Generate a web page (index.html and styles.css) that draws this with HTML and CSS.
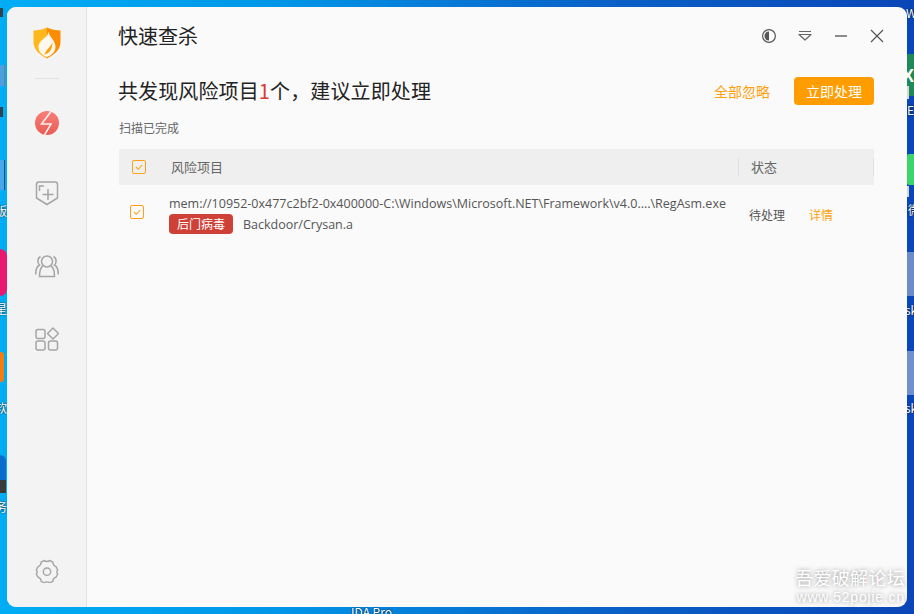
FILE: index.html
```html
<!DOCTYPE html>
<html lang="zh-CN">
<head>
<meta charset="utf-8">
<title>快速查杀</title>
<link rel="stylesheet" href="styles.css">
</head>
<body>
<div class="desktop">
  <div class="dk dk-excel"><span class="dk-x">X</span></div>
  <div class="dk dk-excel-tab"></div>
  <div class="dk dk-green"></div>
  <div class="dk dk-green-tab"></div>
  <div class="dk dk-doc1"></div>
  <div class="dk dk-doc2"></div>
  <div class="dk dk-pink"></div>
  <div class="dk dk-orange"></div>
  <div class="dk dk-blue"></div>
  <div class="dk dk-blue2"></div>
  <div class="dk dk-mini1"></div>
  <div class="dk dk-mini2"></div>
  <div class="dk dk-frame1"></div>
  <div class="dk dk-frame2"></div>
  <span class="dk-t t-r1">W</span>
  <span class="dk-t t-r2">E:</span>
  <span class="dk-t t-r3">微</span>
  <span class="dk-t t-r4">sk</span>
  <span class="dk-t t-r5">sk</span>
  <span class="dk-t t-l1">版</span>
  <span class="dk-t t-l2">星</span>
  <span class="dk-t t-l3">软</span>
  <span class="dk-t t-l4">务</span>
  <span class="dk-t t-b">IDA Pro</span>

  <main class="window">
    <aside class="sidebar">
      <svg class="logo" viewBox="0 0 28 32" width="28" height="32">
        <path d="M14 0.500 C10 2.500 5 3.200 0.500 3.500 V15 C0.500 23 7 28 14 31.500 V0.500 Z" fill="#ffb71c"/>
        <path d="M14 0.500 C18 2.500 23 3.200 27.500 3.500 V15 C27.500 23 21 28 14 31.500 V0.500 Z" fill="#ff8c00"/>
        <path d="M15.500 4.500 C16 10 22.500 13 22.500 20 C22.500 25 18.500 28.500 14 30 C9.500 28.500 5.500 25 5.500 20 C5.500 15.500 8.500 14 10.500 11.500 C12.500 10.500 15 8.500 15.500 4.500 Z" fill="#fff8ec"/>
        <path d="M19.500 15 C18 20 14 21 11.500 27.500 C16 26.500 19.500 23 19.500 15 Z" fill="#ff9f12"/>
      </svg>
      <div class="side-rule"></div>
      <svg class="nav-icon nav-bolt" viewBox="0 0 24 24" width="24" height="24">
        <defs>
          <linearGradient id="rd" x1="0" x2="0" y1="0" y2="1">
            <stop offset="0" stop-color="#f8807a"/><stop offset="1" stop-color="#ea5a54"/>
          </linearGradient>
        </defs>
        <circle cx="12" cy="12" r="12" fill="url(#rd)"/>
        <path d="M16 0.500 L6.500 13 H16 L9.500 24" fill="none" stroke="#fdeeea" stroke-width="1.600"/>
      </svg>
      <svg class="nav-icon nav-shield" viewBox="0 0 24 26" width="24" height="26" fill="none" stroke="#a5a5a5" stroke-width="1.500">
        <path d="M4 1 H20 Q22.500 1 22.500 3.500 V17 L12 23.500 L1.500 17 V3.500 Q1.500 1 4 1 Z"/>
        <path d="M13 8 V19 M7.500 13.500 H18.500 M4.500 10 V5 H9"/>
      </svg>
      <svg class="nav-icon nav-users" viewBox="0 0 24 24" width="24" height="24" fill="none" stroke="#a5a5a5" stroke-width="1.500">
        <circle cx="12" cy="7.500" r="5.500"/>
        <path d="M8 12 Q4.500 14 4.500 22.500 H19.500 Q19.500 14 16 12"/>
        <path d="M5.500 2.500 Q2.500 4 3 8 Q3.300 10 4.500 11 Q0.700 13 0.700 20.500"/>
        <path d="M18.500 2.500 Q21.500 4 21 8 Q20.700 10 19.500 11 Q23.300 13 23.300 20.500"/>
      </svg>
      <svg class="nav-icon nav-apps" viewBox="0 0 24 24" width="24" height="24" fill="none" stroke="#a5a5a5" stroke-width="1.500">
        <rect x="1" y="2.500" width="9" height="9" rx="2"/>
        <rect x="1" y="14" width="9" height="9" rx="2"/>
        <rect x="13.500" y="14" width="9" height="9" rx="2"/>
        <path d="M18 1 L23.500 6.500 L18 12 L12.500 6.500 Z" stroke-linejoin="round"/>
      </svg>
      <svg class="nav-icon nav-gear" viewBox="0 0 24 24" width="24" height="24" fill="none" stroke="#a5a5a5" stroke-width="1.400">
        <path d="M9.500 1.500 C10.500 2.800 13.500 2.800 14.500 1.500 L18 3.200 C17.600 4.800 19.300 7.400 21 7.600 L22.800 11 C21.500 12 21.500 14 22.800 15 L21 18.200 C19.300 18.300 17.600 20.800 18 22.300 L14.500 23.800 C13.500 22.600 10.500 22.600 9.500 23.800 L6 22.300 C6.400 20.800 4.700 18.300 3 18.200 L1.200 15 C2.500 14 2.500 12 1.200 11 L3 7.600 C4.700 7.400 6.400 4.800 6 3.200 Z" stroke-linejoin="round"/>
        <circle cx="12" cy="12.700" r="3.700"/>
      </svg>
    </aside>

    <section class="content">
      <header class="titlebar">
        <h1 class="app-title">快速查杀</h1>
        <div class="win-controls">
          <svg viewBox="0 0 16 16" width="16" height="16" fill="none" stroke="#555" stroke-width="1.200"><circle cx="8" cy="8" r="6.400"/><path d="M8 3.500 A4.500 4.500 0 0 1 8 12.500 Z" fill="#555" stroke="none" transform="matrix(-1 0 0 1 16 0)"/></svg>
          <svg viewBox="0 0 16 16" width="16" height="16" fill="none" stroke="#666" stroke-width="1.200"><path d="M2 3.500 H14 M2 6.500 H14 L8 12 L2 6.500 Z" stroke-linejoin="round"/></svg>
          <svg viewBox="0 0 16 16" width="16" height="16" fill="none" stroke="#666" stroke-width="1.400"><path d="M2 8 H14"/></svg>
          <svg viewBox="0 0 16 16" width="16" height="16" fill="none" stroke="#555" stroke-width="1.200"><path d="M2 2 L14 14 M14 2 L2 14"/></svg>
        </div>
      </header>

      <div class="summary">
        <h2 class="headline">共发现风险项目<span class="count">1</span>个，建议立即处理</h2>
        <div class="actions">
          <a class="ignore-all">全部忽略</a>
          <button class="primary">立即处理</button>
        </div>
      </div>
      <p class="status-line">扫描已完成</p>

      <div class="table-head">
        <span class="cell-check head-check"><span class="check"><svg viewBox="0 0 14 14" width="14" height="14" fill="none" stroke="#ff9f1a" stroke-width="1.100"><path d="M4 7 L6.300 9.300 L10 5"/></svg></span></span>
        <span class="head-name">风险项目</span>
        <span class="head-state">状态</span>
      </div>
      <div class="row">
        <span class="cell-check"><span class="check"><svg viewBox="0 0 14 14" width="14" height="14" fill="none" stroke="#ff9f1a" stroke-width="1.100"><path d="M4 7 L6.300 9.300 L10 5"/></svg></span></span>
        <div class="row-main">
          <div class="path">mem://10952-0x477c2bf2-0x400000-C:\Windows\Microsoft.NET\Framework\v4.0....\RegAsm.exe</div>
          <div class="meta"><span class="tag">后门病毒</span><span class="threat">Backdoor/Crysan.a</span></div>
        </div>
        <span class="state">待处理</span>
        <a class="detail">详情</a>
      </div>
    </section>
  </main>

  <div class="watermark">
    <div class="wm-cn">吾爱破解论坛</div>
    <div class="wm-url">www.52pojie.cn</div>
  </div>
</div>
</body>
</html>
```

FILE: styles.css
```css
* { box-sizing: border-box; }
html, body { margin: 0; padding: 0; }
body {
  width: 914px;
  height: 614px;
  overflow: hidden;
  font-family: "Noto Sans CJK SC", "Noto Sans", sans-serif;
}
.desktop {
  position: relative;
  width: 914px;
  height: 614px;
  overflow: hidden;
  background: linear-gradient(90deg, #00adf4 0%, #0096e8 30%, #0a62c8 65%, #0a46b8 100%);
}
.window {
  position: absolute;
  left: 7px;
  top: 7px;
  width: 900px;
  height: 600px;
  display: flex;
  background: #fafafa;
  border-radius: 9px;
  overflow: hidden;
}
.sidebar {
  position: relative;
  width: 80px;
  flex: none;
  background: #f3f3f3;
  border-right: 1px solid #e2e2e2;
  display: flex;
  flex-direction: column;
  align-items: center;
}
.logo { margin-top: 20px; }
.side-rule { width: 24px; height: 1px; background: #e2e2e2; margin-top: 19px; }
.nav-icon { flex: none; display: block; }
.nav-bolt { margin-top: 32px; }
.nav-shield { margin-top: 46px; }
.nav-users { margin-top: 47px; }
.nav-apps { margin-top: 49px; }
.nav-gear { margin-top: auto; margin-bottom: 24px; }

.content { flex: 1; min-width: 0; padding: 0 33px 0 32px; }
.titlebar { height: 57px; display: flex; align-items: center; justify-content: space-between; }
.app-title { margin: 0 0 0 -1px; font-size: 20px; font-weight: 400; color: #222; line-height: 57px; }
.win-controls { display: flex; gap: 20px; margin-right: -11px; align-items: center; }
.win-controls svg { display: block; }

.summary { display: flex; align-items: center; justify-content: space-between; height: 28px; margin-top: 13px; }
.headline { margin: 0 0 0 -1px; font-size: 20px; font-weight: 400; color: #222; line-height: 28px; letter-spacing: .12px; }
.count { color: #d9392f; }
.actions { display: flex; align-items: center; gap: 24px; }
.ignore-all { font-size: 14px; color: #ff9f0a; }
.primary {
  width: 80px;
  height: 28px;
  padding: 0;
  border: 0;
  border-radius: 4px;
  background: #ff9d00;
  color: #fff;
  font: 14px "Noto Sans CJK SC", sans-serif;
}
.status-line { margin: 15px 0 0; font-size: 12px; line-height: 16px; color: #666; }

.table-head {
  height: 36px;
  margin-top: 13px;
  background: #efefef;
  display: flex;
  align-items: center;
  position: relative;
  font-size: 13px;
  color: #666;
}
.cell-check { display: flex; flex: none; width: 50px; padding-left: 11px; }
.head-check { width: 52px; padding-left: 13px; }
.check {
  width: 14px;
  height: 14px;
  display: block;
  border: 1px solid #ff9f1a;
  border-radius: 2px;
}
.check svg { display: block; margin: -1px; }
.head-name { flex: 1; line-height: 18px; }
.head-state { width: 136px; flex: none; padding-left: 12px; height: 18px; line-height: 18px; border-left: 1px solid #e0e0e0; border-right: 1px solid #e0e0e0; }

.row { display: flex; align-items: center; height: 54px; font-size: 12px; color: #555; }
.row-main { width: 580px; flex: none; margin-top: 4px; font-family: "Open Sans", "Noto Sans CJK SC", sans-serif; font-size: 12.500px; }
.path { line-height: 19px; white-space: nowrap; }
.meta { display: flex; align-items: center; margin-top: 1px; }
.tag {
  width: 64px;
  height: 20px;
  line-height: 20px;
  text-align: center;
  border-radius: 4px;
  background: #cf4137;
  color: #fff;
  font-size: 12px;
  font-family: "Noto Sans CJK SC", sans-serif;
}
.threat { margin-left: 10px; }
.state { width: 60px; flex: none; margin-top: 4px; }
.detail { color: #ff9f0a; margin-top: 4px; }

.dk { position: absolute; }
.dk-excel { left: 907px; top: 54px; width: 7px; height: 42px; background: #1f8a57; overflow: hidden; }
.dk-x { color: #fff; font: bold 18px "Liberation Sans", sans-serif; position: absolute; left: -5px; top: 12px; }
.dk-excel-tab { left: 907px; top: 86px; width: 2px; height: 13px; background: #d8d8d8; }
.dk-green { left: 907px; top: 154px; width: 7px; height: 31px; background: #3dd46c; border-radius: 2px 0 0 2px; }
.dk-green-tab { left: 907px; top: 186px; width: 2px; height: 11px; background: #d8d8d8; }
.dk-doc1 { left: 907px; top: 252px; width: 7px; height: 44px; background: #6c8cc8; }
.dk-doc2 { left: 907px; top: 351px; width: 7px; height: 44px; background: #7090cc; }
.dk-pink { left: 0; top: 249px; width: 7px; height: 47px; background: #e8186f; border-radius: 0 10px 10px 0; }
.dk-orange { left: 0; top: 352px; width: 4px; height: 30px; background: #f57d10; border-radius: 0 3px 3px 0; }
.dk-blue { left: 0; top: 455px; width: 6px; height: 25px; background: #0a6bd0; border-radius: 0 6px 0 0; }
.dk-blue2 { left: 0; top: 480px; width: 6px; height: 13px; background: #3a3a3a; }
.dk-mini1 { left: 0; top: 8px; width: 3px; height: 9px; background: #33424f; }
.dk-mini2 { left: 0; top: 107px; width: 3px; height: 10px; background: #33424f; }
.dk-frame1 { left: 0; top: 65px; width: 5px; height: 21px; background: #4f9fe0; border-right: 1px solid #77808c; }
.dk-frame2 { left: 0; top: 160px; width: 5px; height: 30px; background: #4aa6ea; border-right: 1px solid #0a4a80; }
.dk-t { position: absolute; color: #fff; font-size: 12px; line-height: 14px; text-shadow: 0 0 2px #000; }
.t-r1 { left: 906px; top: 6px; }
.t-r2 { left: 907px; top: 103px; }
.t-r3 { left: 908px; top: 203px; }
.t-r4 { left: 905px; top: 303px; }
.t-r5 { left: 905px; top: 401px; }
.t-l1 { left: -5px; top: 204px; }
.t-l2 { left: -5px; top: 302px; }
.t-l3 { left: -5px; top: 401px; }
.t-l4 { left: -5px; top: 500px; }
.t-b { left: 351px; top: 605px; }

.watermark {
  position: absolute;
  right: 9px;
  top: 566px;
  text-align: right;
  color: #fff;
  text-shadow: 0 0 4px rgba(110,110,110,.8);
}
.wm-cn { font-size: 18px; line-height: 22px; letter-spacing: .3px; }
.wm-url { font-family: "Liberation Sans", sans-serif; font-size: 14px; line-height: 18px; letter-spacing: .8px; }
```
